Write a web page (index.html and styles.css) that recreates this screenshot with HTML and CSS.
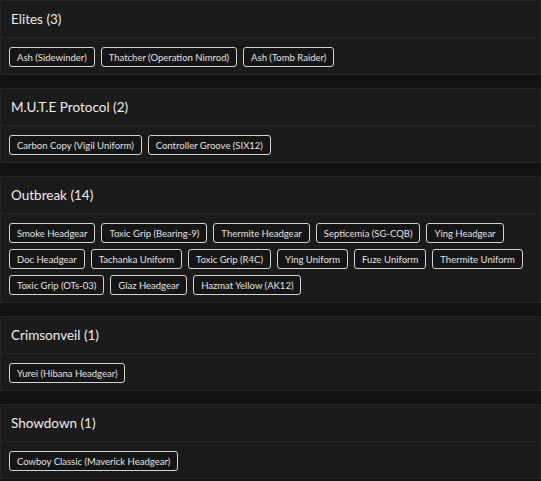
FILE: index.html
```html
<!DOCTYPE html>
<html>
<head>
<meta charset="utf-8">
<link rel="stylesheet" href="styles.css">
</head>
<body>
<div class="list">
  <section class="card">
    <h2 class="card-head">Elites (3)</h2>
    <div class="chips">
      <span class="chip">Ash (Sidewinder)</span>
      <span class="chip">Thatcher (Operation Nimrod)</span>
      <span class="chip">Ash (Tomb Raider)</span>
    </div>
  </section>
  <section class="card">
    <h2 class="card-head">M.U.T.E Protocol (2)</h2>
    <div class="chips">
      <span class="chip">Carbon Copy (Vigil Uniform)</span>
      <span class="chip">Controller Groove (SIX12)</span>
    </div>
  </section>
  <section class="card">
    <h2 class="card-head">Outbreak (14)</h2>
    <div class="chips">
      <span class="chip">Smoke Headgear</span>
      <span class="chip">Toxic Grip (Bearing-9)</span>
      <span class="chip">Thermite Headgear</span>
      <span class="chip">Septicemia (SG-CQB)</span>
      <span class="chip">Ying Headgear</span>
      <span class="chip">Doc Headgear</span>
      <span class="chip">Tachanka Uniform</span>
      <span class="chip">Toxic Grip (R4C)</span>
      <span class="chip">Ying Uniform</span>
      <span class="chip">Fuze Uniform</span>
      <span class="chip">Thermite Uniform</span>
      <span class="chip">Toxic Grip (OTs-03)</span>
      <span class="chip">Glaz Headgear</span>
      <span class="chip">Hazmat Yellow (AK12)</span>
    </div>
  </section>
  <section class="card">
    <h2 class="card-head">Crimsonveil (1)</h2>
    <div class="chips">
      <span class="chip">Yurei (Hibana Headgear)</span>
    </div>
  </section>
  <section class="card">
    <h2 class="card-head">Showdown (1)</h2>
    <div class="chips">
      <span class="chip">Cowboy Classic (Maverick Headgear)</span>
    </div>
  </section>
</div>
</body>
</html>
```
FILE: styles.css
```css
html, body {
  margin: 0;
  padding: 0;
  background: #121212;
}
body {
  font-family: Lato, "Open Sans", sans-serif;
  color: #e6e6e6;
}
.list {
  display: flex;
  flex-direction: column;
  gap: 13px;
}
.card {
  background: #1b1b1b;
  border: 1px solid #232323;
  border-top-color: #262626;
}
.card-head {
  margin: 0;
  height: 36px;
  display: flex;
  align-items: center;
  padding: 0 10px;
  font-size: 13.5px;
  font-weight: 400;
  color: #ececec;
  border-bottom: 1px solid #262626;
}
.chips {
  display: flex;
  flex-wrap: wrap;
  gap: 6px;
  padding: 9px 8px 7px;
}
.chip {
  box-sizing: border-box;
  height: 20px;
  display: inline-flex;
  align-items: center;
  padding: 0 7px;
  font-size: 9.5px;
  color: #e2e2e2;
  background: #151515;
  border: 1.5px solid #d2d2d2;
  border-radius: 3px;
  white-space: nowrap;
}
```
